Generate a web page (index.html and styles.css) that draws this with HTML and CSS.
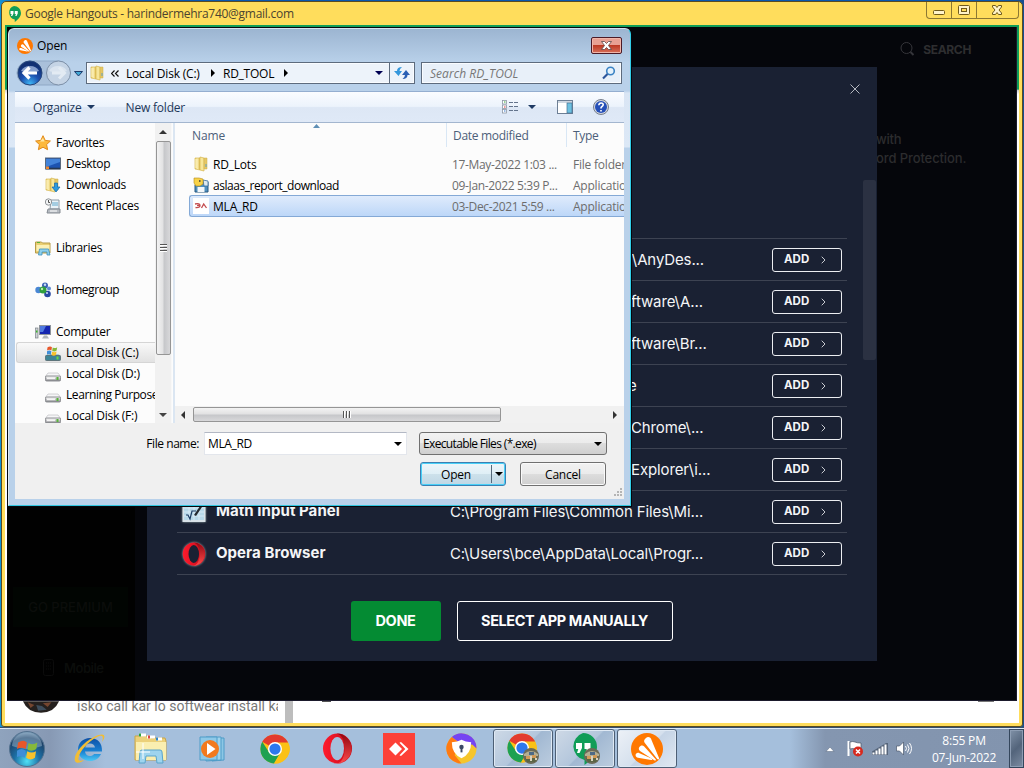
FILE: index.html
```html
<!DOCTYPE html>
<html lang="en">
<head>
<meta charset="utf-8">
<title>Desktop</title>
<link rel="stylesheet" href="styles.css">
</head>
<body>
<svg width="0" height="0" class="defs" aria-hidden="true">
  <defs>
    <linearGradient id="fold" x1="0" x2="1"><stop offset="0" stop-color="#e3c763"/><stop offset=".45" stop-color="#fbeeb0"/><stop offset="1" stop-color="#e0bd50"/></linearGradient>
    <linearGradient id="drv" x1="0" x2="0" y1="0" y2="1"><stop offset="0" stop-color="#f5f5f5"/><stop offset="1" stop-color="#8f9095"/></linearGradient>
    <linearGradient id="op" x1="0" x2="1"><stop offset="0" stop-color="#ff1b2d"/><stop offset="1" stop-color="#c50a1a"/></linearGradient>
    <linearGradient id="op2" x1="0" x2="0" y1="0" y2="1"><stop offset="0" stop-color="#8f0510"/><stop offset="1" stop-color="#ff4b4b"/></linearGradient>
    <radialGradient id="orb" cx=".5" cy=".85" r=".9"><stop offset="0" stop-color="#4fe0f5"/><stop offset=".4" stop-color="#1c6fa5"/><stop offset=".75" stop-color="#1d4167"/><stop offset="1" stop-color="#9fc0d8"/></radialGradient>
    <radialGradient id="back" cx=".5" cy=".95" r=".8"><stop offset="0" stop-color="#3fb7f5"/><stop offset=".5" stop-color="#1c4fae"/><stop offset="1" stop-color="#123072"/></radialGradient>
    <linearGradient id="ie" x1="0" x2="0" y1="0" y2="1"><stop offset="0" stop-color="#0d4fa5"/><stop offset=".6" stop-color="#1b83d4"/><stop offset="1" stop-color="#4cc8f4"/></linearGradient>
    <symbol id="folder" viewBox="0 0 16 16"><path d="M2 2h5v12l-5-1z" fill="url(#fold)" stroke="#d9b955" stroke-width=".7"/><path d="M7 1l4 1v13l-4-1z" fill="#f7e69a" stroke="#d6b44c" stroke-width=".7"/><path d="M11 2h3v11h-3z" fill="#e5c766" stroke="#cfae4a" stroke-width=".5"/><path d="M3 3v9" stroke="#fff6c8"/><path d="M13 8v3" stroke="#5e9fc4"/></symbol>
    <symbol id="avast" viewBox="0 0 32 32"><circle cx="16" cy="16" r="16" fill="#ff7800"/><path d="M15 5c2-2 5-.5 5.500 2l7.500 18c.5 1.500-1 2-2 .8L13.500 9.500C12.500 8 13.500 6 15 5z" fill="#fff"/><path d="M9.500 13c1.300-.8 2.700-.5 3.700.6L24.500 26c1 1.200 0 2-1.300 1.200L9 18C7.200 16.800 7.500 14 9.500 13z" fill="#fff"/><path d="M5.300 20.500c.9-.9 2-.8 3.200-.3L20.500 25.500c1.300.7.8 1.700-.4 1.600L7 24.700c-2.600-.6-3-2.900-1.700-4.200z" fill="#fff"/></symbol>
    <symbol id="hang" viewBox="0 0 28 32"><path d="M14 0a14 14 0 0 1 14 14c0 8-7 14-12.500 18v-5A14 14 0 0 1 14 0z" fill="#109d58"/><path d="M7 10h6v5l-2.500 5H8l1.300-4H7zM15.500 10h6v5L19 20h-2.500l1.300-4h-2.300z" fill="#fff"/></symbol>
    <symbol id="chrome" viewBox="0 0 32 32"><circle cx="16" cy="16" r="15.500" fill="#fbc116"/><path d="M16 16 2.400 8.300A15.600 15.600 0 0 1 29.500 8.300L30 9H16z" fill="#e33b2e"/><path d="M2.400 8.300A15.600 15.600 0 0 0 15 31.500L22 20l-12 0z" fill="#1ea152"/><path d="M15 31.500 22.200 19 30 9a15.500 15.500 0 0 1-15 22.500z" fill="#fbc116"/><circle cx="16" cy="16" r="7.500" fill="#fff"/><circle cx="16" cy="16" r="6" fill="#2d78ee"/></symbol>
    <symbol id="opera" viewBox="0 0 32 32"><ellipse cx="16" cy="16" rx="15" ry="15.500" fill="url(#op)"/><path d="M15 .5a15.500 15.500 0 0 1 0 31C21 31 23.500 23 23.500 16S21 1.500 15 .5z" fill="url(#op2)"/><ellipse cx="15.700" cy="16" rx="7" ry="12" fill="var(--hole)"/></symbol>
    <symbol id="drive" viewBox="0 0 16 16"><path d="M3 7h10l3 4H0z" fill="#f6f6f7" stroke="#b5b6bb" stroke-width=".6"/><rect x=".4" y="10" width="15.200" height="5" rx="1.300" fill="url(#drv)" stroke="#77787d" stroke-width=".8"/><rect x="2" y="11.300" width="8" height="1.800" fill="#f4f4f4"/><rect x="11.500" y="11" width="2" height="3" fill="#58b33a"/></symbol>
    <symbol id="flag" viewBox="0 0 20 20"><path d="M1 4q5-3 8 0L8 10Q4 7.500 0 10z" fill="#e8572a"/><path d="M10.500 4.500q4 2.500 8-.5l-1 6q-4 3-8 .5z" fill="#86b93a"/><path d="M0 11.500q4-3 8 0L7 18q-4-3-8 0z" fill="#3f8ed8"/><path d="M9.300 12q4 2.500 8 0l-1 6q-4 3-8 0z" fill="#f8c22c"/></symbol>
    <symbol id="thumb" viewBox="0 0 16 16"><circle cx="8" cy="8" r="8" fill="#6b6a57"/><path d="M1 6q7-6 14 0v2H1z" fill="#b3ae92"/><path d="M2 10h12l-2 4H4z" fill="#5a6545"/><path d="M3 8h4v3H3zM9 7h4v3H9z" fill="#d19a58"/><path d="M6 4h5v3H6z" fill="#4d6a86"/><path d="M7 8h2v5H7zM12 10h2v2h-2z" fill="#d8d3c0"/></symbol>
    <symbol id="chev" viewBox="0 0 5 8"><path d="M.7.7 4 4 .7 7.300" fill="none" stroke="#c9ccd2"/></symbol>
  </defs>
</svg>

<main class="desktop">
  <section class="hangouts">
    <header class="hg-title">
      <svg class="hg-logo"><use href="#hang"/></svg>
      <span class="hg-name">Google Hangouts - harindermehra740@gmail.com</span>
      <div class="hg-controls">
        <span><svg width="24" height="16"><rect x="6.500" y="8.500" width="11" height="4" rx="1" fill="#fff3c9" stroke="#6f5a1b"/></svg></span>
        <span><svg width="24" height="16"><rect x="6.500" y="3.500" width="11" height="9" rx="1" fill="#fff3c9" stroke="#6f5a1b"/><rect x="9.500" y="6.500" width="5" height="3" fill="#ffdd5c" stroke="#6f5a1b"/></svg></span>
        <span><svg width="41" height="16"><path d="M15.500 3.500h3l1.500 2 1.500-2h3v1.500l-2.500 3 2.500 3v1.500h-3l-1.500-2-1.500 2h-3V11l2.500-3-2.500-3z" fill="#fff3c9" stroke="#6f5a1b"/></svg></span>
      </div>
    </header>
    <div class="hg-body">
      <div class="hg-strip">
        <svg class="hg-avatar" viewBox="0 0 40 12"><path d="M1 0h38Q34 12 20 12 6 12 1 0z" fill="#25201e"/><path d="M6 1l7 3-4 3zM22 2l9-1-4 5z" fill="#74452f"/><path d="M15 4l6 1 5 4-9 1z" fill="#3d4d5c"/></svg>
        <span class="hg-msg">isko call kar lo softwear install ka</span>
        <span class="hg-scroll"></span>
        <span class="hg-dot"></span>
        <span class="hg-dash"></span>
      </div>
    </div>
  </section>

  <section class="avast">
    <aside class="av-side">
      <div class="premium">GO PREMIUM</div>
      <div class="mobile"><svg width="12" height="18"><rect x=".5" y=".5" width="10" height="16" rx="2" fill="none" stroke="#0c0c0c"/><path d="M3 4h5M3 7h5M3 10h5" stroke="#0c0c0c" stroke-dasharray="1 1"/></svg>Mobile</div>
    </aside>
    <div class="av-main">
      <div class="search"><svg width="16" height="16"><circle cx="6.500" cy="7" r="5.500" fill="none" stroke="#35353a"/><path d="M10.500 11l3 3" stroke="#35353a" stroke-width="2"/></svg>SEARCH</div>
      <p class="promo">with<br><span>ord Protection.</span></p>
    </div>
  </section>

  <section class="modal">
    <svg class="modal-x" width="10" height="10"><path d="M.5.5l9 9M9.500.5l-9 9" stroke="#b4b8c0"/></svg>
    <span class="modal-scroll"></span>
    <div class="apps">
      <div class="app"><i></i><b></b><span class="cut p1">t\AnyDes...</span><button>ADD <svg><use href="#chev"/></svg></button></div>
      <div class="app"><i></i><b></b><span class="cut p2">ftware\A...</span><button>ADD <svg><use href="#chev"/></svg></button></div>
      <div class="app"><i></i><b></b><span class="cut p3">ftware\Br...</span><button>ADD <svg><use href="#chev"/></svg></button></div>
      <div class="app"><i></i><b></b><span class="cut p4">e</span><button>ADD <svg><use href="#chev"/></svg></button></div>
      <div class="app"><i></i><b></b><span class="cut p5">Chrome\...</span><button>ADD <svg><use href="#chev"/></svg></button></div>
      <div class="app"><i></i><b></b><span class="cut p6">Explorer\i...</span><button>ADD <svg><use href="#chev"/></svg></button></div>
      <div class="app"><i><svg viewBox="0 0 24 24"><rect x=".5" y="1" width="23" height="21" fill="#d9e2e8"/><rect x="2" y="3" width="20" height="17" fill="#b7d8e8"/><path d="M2 8h20M2 12h20M2 16h20M7 4v16M12 4v16M17 4v16" stroke="#e2f1f9" stroke-width=".7"/><path d="M4 15l2 0 2 4 2-8h4" fill="none" stroke="#1c3c64" stroke-width="1.200"/><path d="M12 15l8-12 2 1-8 12z" fill="#24292f"/></svg></i><b>Math Input Panel</b><span>C:\Program Files\Common Files\Mi...</span><button>ADD <svg><use href="#chev"/></svg></button></div>
      <div class="app"><i><svg viewBox="0 0 24 24"><use href="#opera"/></svg></i><b class="ob">Opera Browser</b><span class="pth2">C:\Users\bce\AppData\Local\Progr...</span><button>ADD <svg><use href="#chev"/></svg></button></div>
    </div>
    <div class="actions"><button class="done">DONE</button><button class="manual">SELECT APP MANUALLY</button></div>
  </section>

  <section class="dialog">
    <header class="dl-title"><svg class="dl-logo"><use href="#avast"/></svg><span>Open</span>
      <div class="dl-close"><svg width="11" height="9" viewBox="0 0 11 9"><path d="M.5.500h3l2 2 2-2h3L7.500 4.500l3 4h-3l-2-2-2 2h-3l3-4z" fill="#fff" stroke="#5d4747" stroke-width=".8"/></svg></div>
    </header>
    <div class="dl-nav">
      <svg class="navbtns" width="68" height="28" viewBox="0 0 68 28"><path d="M14 2h29a12 12 0 0 1 0 24H14a12 12 0 0 1 0-24z" fill="#a9c0da" stroke="#8fa8c5"/><circle cx="15" cy="14" r="12" fill="url(#back)" stroke="#27477c"/><path d="M6 12a10 9 0 0 1 18 0q-9 3-18 0z" fill="#b8cbea" opacity=".7"/><path d="M14.500 8.500L9 14l5.500 5.500M9.500 14H22" fill="none" stroke="#fff" stroke-width="3.200"/><circle cx="43.500" cy="14" r="12" fill="#c5d4e5" stroke="#7d90a8"/><path d="M34 12a10 9 0 0 1 18 0q-9 3-18 0z" fill="#dae4ef"/><path d="M44 8.500l5.500 5.500-5.500 5.500M49 14H37" fill="none" stroke="#e3ebf3" stroke-width="3"/><path d="M59.500 12.500h8L63.500 17z" fill="#3fa8d6" stroke="#1c3a6b"/></svg>
      <div class="addr">
        <svg width="16" height="16"><use href="#folder"/></svg><svg class="dbl" width="8" height="7"><path d="M3.500.5l-3 3 3 3M7.500.5l-3 3 3 3" fill="none" stroke="#111" stroke-width="1.200"/></svg>
        <span class="disk">Local Disk (C:)</span><i class="tri-r"></i><span class="rd">RD_TOOL</span><i class="tri-r"></i>
        <i class="tri-d navy"></i>
        <div class="refresh"><svg width="16" height="14"><path d="M8 1Q3 1 3 5H0l4.500 5L8 5H5.500Q5.500 3 8 1z" fill="#3497dc"/><path d="M8.500 13q5 0 5-4H16L12 4 8 9h3q0 2-2.500 4z" fill="#2a5fb4"/></svg></div>
      </div>
      <div class="dl-search"><span>Search RD_TOOL</span><svg width="14" height="14"><circle cx="8.500" cy="5" r="3.800" fill="#e4f1fb" stroke="#3a83c4" stroke-width="1.600"/><path d="M5.500 8L1 12.500" stroke="#2b559b" stroke-width="2.200"/></svg></div>
    </div>
    <div class="dl-tools">
      <span class="organize">Organize</span><i class="tri-d"></i><span class="newf">New folder</span>
      <svg class="views" width="34" height="14"><g fill="#fff" stroke="#8d97a5" stroke-width=".8"><rect x=".5" y=".5" width="4" height="3.500"/><rect x=".5" y="5" width="4" height="3.500"/><rect x=".5" y="9.500" width="4" height="3.500"/></g><path d="M2 2h1.500" stroke="#3a3"/><path d="M2 7h1.500" stroke="#d33"/><path d="M2 11h1.500" stroke="#37c"/><path d="M7 2.500h9M7 6.500h9M7 10.500h9" stroke="#64748c" stroke-dasharray="4 1"/><path d="M26 5h8l-4 4z" fill="#1e3a63"/></svg>
      <svg class="preview" width="16" height="14"><rect x=".5" y=".5" width="15" height="13" fill="#fff" stroke="#6d7f95"/><path d="M1 2h14" stroke="#9cafc4"/><rect x="10" y="3" width="5" height="10" fill="#6cc0e0" stroke="#456f92" stroke-width=".7"/></svg>
      <svg class="help" width="16" height="16"><circle cx="8" cy="8" r="7.500" fill="#d2d6de" stroke="#777f8d"/><circle cx="8" cy="8" r="6" fill="#254fb8"/><path d="M5.800 6.300q.2-2.300 2.300-2.300t2.100 1.800q0 1-1.200 1.700T8 9.500M8 11v1.500" fill="none" stroke="#fff" stroke-width="1.600"/></svg>
    </div>
    <div class="dl-body">
      <nav class="tree">
        <div class="r top"><svg viewBox="0 0 16 16"><path d="M8 .7l2.200 4.700 5.200.6-3.800 3.500 1 5.200L8 12.200l-4.600 2.500 1-5.200L.6 6l5.200-.6z" fill="#fdb93c" stroke="#e18a1a"/><path d="M8 3l1.500 3.500H5z" fill="#ffe9a8"/></svg>Favorites</div>
        <div class="r"><svg viewBox="0 0 16 16"><rect x=".5" y="2" width="15" height="11" fill="#1c53b0" stroke="#59697d"/><path d="M1 3h14v3L1 11z" fill="#4283d9"/><path d="M1 12.500h14" stroke="#26374f" stroke-width="1.600"/><rect x="1" y="10.500" width="3" height="2.500" fill="#f0862c"/></svg>Desktop</div>
        <div class="r dn"><svg viewBox="0 0 16 16"><use href="#folder" x="-1" width="16" height="16"/><path d="M9.500 6h3v4H15l-4 5L7 10h2.500z" fill="#2b9ae0" stroke="#1568a8" stroke-width=".7"/></svg>Downloads</div>
        <div class="r"><svg viewBox="0 0 16 16"><path d="M6 2h8v9H5z" fill="#eaf2f7" stroke="#8e9ba6"/><path d="M7 5h6M7 7h6" stroke="#61a8cc"/><path d="M3 11h12v4H2z" fill="#b7bcc2" stroke="#858b92"/><circle cx="3.500" cy="4" r="3.200" fill="#f2f4f5" stroke="#8e9296"/><path d="M3.500 2v2.500H5" stroke="#555" fill="none"/><path d="M5 13h7" stroke="#fff"/></svg>Recent Places</div>
        <div class="r gap"></div>
        <div class="r top"><svg viewBox="0 0 16 16"><path d="M.5 3V2h6l1 1h7.500v10H.5z" fill="#e9ce72" stroke="#b69b48"/><path d="M1.500 5h13v6h-13z" fill="#fbf0b4"/><path d="M2 2.500h3" stroke="#56b338"/><path d="M3.500 15l1-6h9l1.500 6h-3v-3h-5v3z" fill="#8fd0ec" stroke="#3e90bc" stroke-width=".8"/></svg>Libraries</div>
        <div class="r gap"></div>
        <div class="r top hm"><svg viewBox="0 0 16 16"><circle cx="10" cy="3.500" r="3" fill="#3b62b5"/><circle cx="3.500" cy="8" r="3.200" fill="#4a87d4"/><circle cx="12.500" cy="12" r="3.300" fill="#2848a3"/><circle cx="14" cy="6.500" r="2" fill="#5c8bd0"/><circle cx="8" cy="8" r="3.500" fill="#2f9f3c"/><circle cx="7" cy="7" r="1.200" fill="#b4eab0"/><circle cx="10" cy="2.700" r="1.200" fill="#c8dcf6"/><circle cx="12" cy="11" r="1" fill="#cfe0fa"/></svg>Homegroup</div>
        <div class="r gap"></div>
        <div class="r top"><svg viewBox="0 0 16 16"><rect x=".5" y="4" width="2.500" height="10" fill="#cdd1d5" stroke="#7b8288" stroke-width=".7"/><path d="M1 7.500h1.500" stroke="#3db52c" stroke-width="2"/><rect x="4.500" y="1.500" width="11" height="9" fill="#1526b0" stroke="#8d939b"/><path d="M5 2h6L8 8H5z" fill="#4f79e0"/><path d="M7 14.500l2-3h3l2 3z" fill="#aeb4ba"/></svg>Computer</div>
        <div class="r sel"><svg viewBox="0 0 16 16"><path d="M2.500 9h11l2 2H.5z" fill="#a7c8cf"/><rect x=".4" y="10.500" width="15.200" height="5" rx="1" fill="#3d8596" stroke="#50636a" stroke-width=".8"/><rect x="11.500" y="11.500" width="2" height="3" fill="#64d649"/><use href="#flag" x="2" y="0" width="11" height="11"/></svg>Local Disk (C:)</div>
        <div class="r"><svg viewBox="0 0 16 16"><use href="#drive"/></svg>Local Disk (D:)</div>
        <div class="r lp"><svg viewBox="0 0 16 16"><use href="#drive"/></svg>Learning Purpose</div>
        <div class="r"><svg viewBox="0 0 16 16"><use href="#drive"/></svg>Local Disk (F:)</div>
      </nav>
      <div class="vscroll"><i class="tri-u"></i><span class="vthumb"><em></em></span><i class="tri-d"></i></div>
      <div class="list">
        <div class="head"><span>Name</span><span class="c2">Date modified</span><span class="c3">Type</span><svg class="sort" width="7" height="4"><path d="M0 4l3.500-4L7 4z" fill="#5f8fb5"/></svg></div>
        <div class="files">
          <div class="file"><svg viewBox="0 0 16 16"><use href="#folder"/></svg><b>RD_Lots</b><span>17-May-2022 1:03 ...</span><span class="ty">File folder</span></div>
          <div class="file"><svg viewBox="0 0 16 16"><path d="M4 5h11v10H2V8z" fill="#4f8fc0" stroke="#27567e"/><rect x="4.500" y="10" width="7" height="5" fill="#f3f7fa"/><path d="M10 3l5 1v5h-4z" fill="#dfe9f0" stroke="#376d9d" stroke-width=".8"/><path d="M1 1h5l4 1v5l-3 2H3L1 6z" fill="#f8d248" stroke="#b28a1a" stroke-width=".6"/><path d="M6 4h1.500" stroke="#333" stroke-width="1.300"/></svg><b class="asl">aslaas_report_download</b><span>09-Jan-2022 5:39 P...</span><span class="ty">Applicatio</span></div>
          <div class="file on"><svg viewBox="0 0 16 16"><rect width="16" height="16" fill="#fff"/><path d="M2 6q5-1 5 1.500T2.500 9.500M4 7.500h3M8.500 10l2.200-4 2.800 4" fill="none" stroke="#c34b4f" stroke-width="1.300"/></svg><b>MLA_RD</b><span>03-Dec-2021 5:59 ...</span><span class="ty">Applicatio</span></div>
        </div>
        <div class="hscroll"><i class="tri-l"></i><span class="hthumb"><em></em></span><i class="tri-r"></i></div>
      </div>
    </div>
    <footer class="dl-foot">
      <div class="frow"><label>File name:</label><div class="fname"><span>MLA_RD</span><i class="tri-d blk"></i></div><div class="ftype"><span>Executable Files (*.exe)</span><i class="tri-d blk"></i></div></div>
      <div class="brow"><button class="w7 open"><span>Open</span><em><i class="tri-d blk"></i></em></button><button class="w7 cancel">Cancel</button></div>
      <svg class="grip" width="9" height="9"><path d="M7 1h2M7 4h2M4 4h2M7 7h2M4 7h2M1 7h2" stroke="#b5b5b5" stroke-width="2"/></svg>
    </footer>
  </section>

  <footer class="taskbar">
    <div class="slot start"><svg width="36" height="36" viewBox="0 0 36 36"><circle cx="18" cy="18" r="17.500" fill="url(#orb)" stroke="#53718e"/><path d="M3 15a15 13.500 0 0 1 30 0q-15 6-30 0z" fill="#a8c2d4" opacity=".45"/><use href="#flag" x="8" y="7" width="22" height="22"/></svg></div>
    <div class="slot ie"><svg width="34" height="32" viewBox="0 0 34 32"><path d="M17 5c-7 0-12 5-12 11.500S10 28 17 28c5 0 9-2.500 11-7h-7c-1 1.500-2.500 2-4 2-3 0-4.700-2-5-4.500h17C29.500 10 24.500 5 17 5zm-4.800 9.500C12.600 12 14.500 10.500 17 10.500s4.500 1.500 5 4z" fill="url(#ie)" fill-rule="evenodd"/><path d="M29 9C34 2 31-1 21 4 9 10 0 22 2 28c1 3 6 2 9-1-4 1.500-6 1-5.500-2C6.500 18 16 8 24 4c5-2.500 7-1 5 5z" fill="#f2bd35"/></svg></div>
    <div class="slot"><svg width="34" height="32" viewBox="0 0 34 32"><path d="M1 3h14l2 2h14l1 3v19H1z" fill="#ecd079" stroke="#c9a64a"/><path d="M5 2h7M13 4h8M22 6h6" stroke="#fff" stroke-width="3"/><path d="M5 2h2" stroke="#2ba33d" stroke-width="3"/><path d="M14 4h2" stroke="#d44" stroke-width="3"/><path d="M22 6h2" stroke="#38c" stroke-width="3"/><path d="M2 9h30v18H2z" fill="#faeeb0"/><path d="M5 30l1-11q0-2 2-2h18q2 0 2 2l1 11h-6l-1-7H12l-1 7z" fill="#9ed4ee" stroke="#5aa4cb"/><path d="M9 10v16M2 19h14" stroke="#fff" stroke-width="1"/></svg></div>
    <div class="slot"><svg width="30" height="28" viewBox="0 0 30 28"><path d="M14 3h12v22l-12 1z" fill="#8cc7e5" stroke="#4e9cc8"/><path d="M8 2h15v23l-15 1z" fill="#9fd3ec" stroke="#4e9cc8"/><path d="M2 2h17v23H2z" fill="#8ec9e8" stroke="#4e9cc8"/><circle cx="12" cy="14" r="9" fill="#f27a1e"/><path d="M9 8l8.500 6L9 20z" fill="#fff"/></svg></div>
    <div class="slot"><svg width="30" height="30"><use href="#chrome"/></svg></div>
    <div class="slot"><svg width="31" height="31"><use href="#opera"/></svg></div>
    <div class="slot"><svg width="32" height="32"><path d="M0 0h32v32H0z" fill="#fd4037"/><path d="M12.500 9.500l6.500 6.500-6.500 6.500L6 16z" fill="#fff"/><path d="M16.500 9.800L18 9l7.500 7-7.500 7-1.500-.8L22.300 16z" fill="#fff"/></svg></div>
    <div class="slot"><svg width="31" height="31" viewBox="0 0 32 32"><circle cx="16" cy="16" r="15.500" fill="#f6c52b"/><path d="M16 31.500A15.500 15.500 0 0 1 6 4l6 5-3 14z" fill="#ff7a12"/><path d="M6 4a15.500 15.500 0 0 1 25.500 12l-4-4-15-3z" fill="#7544f2"/><path d="M16 7q4 2.500 10 2.500 0 12-10 16.500Q6 21.500 6 9.500q6 0 10-2.500z" fill="#fff"/><circle cx="16" cy="14.500" r="2.300" fill="#3b4966"/><path d="M15 15h2v5h-2z" fill="#3b4966"/></svg></div>
    <div class="task"><svg width="32" height="32" viewBox="0 0 32 32"><use href="#chrome" width="30" height="30"/><use href="#thumb" x="16" y="15" width="16" height="16"/></svg></div>
    <div class="task"><svg width="32" height="32" viewBox="0 0 32 32"><use href="#hang" width="28" height="32"/><use href="#thumb" x="15" y="15" width="16" height="16"/></svg></div>
    <div class="task lit"><svg width="32" height="32"><use href="#avast"/></svg></div>
    <div class="tray">
      <svg width="10" height="6"><path d="M1 5.500L5 1l4 4.500z" fill="#fff" stroke="#54657c" stroke-width=".5"/></svg>
      <svg class="tf" width="17" height="17"><path d="M1.500 1v15" stroke="#fff" stroke-width="2"/><path d="M3 2q3-1 5 0t6 1v7q-4 0-6-1T3 9z" fill="#fff" stroke="#485465" stroke-width=".7"/><circle cx="11" cy="11.500" r="5" fill="#d7291e"/><path d="M9 9.500l4 4M13 9.500l-4 4" stroke="#fff" stroke-width="1.500"/></svg>
      <svg class="sg" width="16" height="12"><path d="M0 12V8.500L14 0h2v12z" fill="#56657a"/><path d="M1.500 9.500v2M4.500 7.500v4M7.500 5.500v6M10.500 3.500v8M13.500 1.500v10" stroke="#fff" stroke-width="2"/></svg>
      <svg class="sp" width="16" height="15"><path d="M.5 5h3l4-4v13l-4-4h-3z" fill="#fff" stroke="#4b586b" stroke-width=".7"/><path d="M9.500 5q2 2.500 0 5M11.500 3.500q3 4 0 8M13.500 2q4 5.500 0 11" fill="none" stroke="#fff"/></svg>
      <div class="clock"><span>8:55 PM</span><span class="dt">07-Jun-2022</span></div>
      <div class="peek"></div>
    </div>
  </footer>
</main>
</body>
</html>
```
FILE: styles.css
```css
* { box-sizing: border-box; }
body { margin: 0; font: 12px "Open Sans", "Noto Sans", sans-serif; }
button { font: inherit; letter-spacing: inherit; margin: 0; padding: 0; }
svg { display: block; flex: none; }
i, em, b { font-style: normal; font-weight: normal; }
.defs { position: absolute; }
.desktop { position: relative; width: 1024px; height: 768px; overflow: hidden; background: linear-gradient(90deg, #1493d6 0, #0a58b0 2%, #0a58b0 98%, #174f8e 100%); --hole: #a5bfdc; }
.desktop span, .desktop button { white-space: nowrap; }

/* Hangouts window */
.hangouts { position: absolute; left: 1px; top: 1px; width: 1022px; height: 726px; border: 1px solid #5a4c22; border-radius: 5px 5px 3px 3px; background: #ffdd5c; padding: 0 3px 3px; display: flex; flex-direction: column; }
.hg-title { height: 23px; display: flex; align-items: center; padding-left: 1px; color: #4b4430; }
.hg-logo { width: 14px; height: 16px; margin-left: 1px; }
.hg-name { margin-left: 4px; flex: 1; letter-spacing: -.27px; }
.hg-controls { align-self: flex-start; display: flex; border: 1px solid #8c7833; border-top: 0; border-radius: 0 0 4px 4px; }
.hg-controls span + span { border-left: 1px solid #8c7833; }
.hg-body { flex: 1; border: 2px solid #eee; border-bottom: 0; border-image: linear-gradient(#109d58 64px, #cfcfcf 65px, #fff 69px) 2; background: #fff; display: flex; align-items: flex-end; }
.hg-strip { height: 22px; width: 100%; display: flex; align-items: flex-start; }
.hg-avatar { width: 38px; height: 12px; margin-left: 15px; }
.hg-msg { font-family: Roboto, sans-serif; font-size: 14px; color: #777; width: 201px; overflow: hidden; margin: -3px 0 0 17px; letter-spacing: 0; }
.hg-scroll { width: 8px; height: 22px; background: #bdbdbd; margin-left: 7px; }
.hg-dot { width: 9px; height: 1px; background: #555; margin-left: 29px; }
.hg-dash { width: 16px; height: 1px; background: #777; margin-left: 647px; }

/* Antivirus window behind the modal */
.avast { position: absolute; left: 7px; top: 27px; width: 1010px; height: 674px; display: flex; background: #05060b; border-bottom: 1px solid #1b1a2c; border-right: 1px solid #1b1a2c; font-family: Inter, sans-serif; }
.av-side { width: 128px; background: #010101; display: flex; flex-direction: column; padding: 560px 6px 0; color: #0b0d0b; }
.premium { height: 40px; background: #010502; text-align: center; font-size: 13px; font-weight: 500; line-height: 40px; margin-right: 1px; }
.mobile { margin-top: 32px; padding-left: 30px; height: 18px; display: flex; align-items: center; gap: 9px; font-size: 13px; font-weight: 600; letter-spacing: -.5px; }
.av-main { flex: 1; display: flex; flex-direction: column; align-items: flex-end; padding-top: 14px; }
.search { display: flex; align-items: center; gap: 7px; color: #2e2e30; font-weight: 700; font-size: 12px; letter-spacing: -.35px; margin-right: 45px; }
.promo { margin: 73px 13px 0 0; width: 127px; font-size: 13px; line-height: 19px; font-weight: 500; color: #2c2c2e; letter-spacing: -.25px; }
.promo span { letter-spacing: -.1px; }

.modal { position: absolute; left: 147px; top: 67px; width: 730px; height: 594px; background: #1a2133; padding: 171px 30px 0; font-family: Inter, sans-serif; color: #f4f5f7; --hole: #1a2133; }
.modal-x { position: absolute; right: 17px; top: 17px; }
.modal-scroll { position: absolute; right: 1px; top: 113px; width: 13px; height: 180px; border-radius: 2px; background: #2b3142; }
.apps { border-bottom: 1px solid #3d4352; }
.app { height: 42px; border-top: 1px solid #3d4352; display: grid; grid-template-columns: 38px 235px 322px 70px; align-items: center; font-size: 15px; }
.app i svg { width: 24px; height: 24px; margin-left: 5px; filter: drop-shadow(0 0 1px #9aa); }
.app b { font-weight: 700; letter-spacing: .05px; margin: -2px 0 0 1px; }
.app span { letter-spacing: -.12px; margin-top: -1px; }
.app button { width: 70px; height: 24px; border: 1px solid #eceef2; border-radius: 3px; background: none; color: #f4f5f7; font-weight: 700; font-size: 11.500px; letter-spacing: 0; display: flex; align-items: center; padding: 0 0 1px 11px; }
.app button svg { width: 5px; height: 8px; margin: 2px 0 0 12px; }
.app .cut { margin-left: 181px; }
.app .p1 { margin-left: 177px; }
.app .p4 { margin-left: 178px; }
.actions { display: flex; justify-content: center; gap: 16px; padding-top: 26px; }
.actions button { height: 40px; border-radius: 3px; font-weight: 700; font-size: 14.500px; color: #fff; letter-spacing: -.4px; padding: 0 1px 2px 0; }
.done { width: 90px; border: 0; background: #048b33; }
.manual { width: 216px; border: 1px solid #fff; background: none; }
.actions .manual { border: 1px solid #fff; }

/* File dialog */
.dialog { position: absolute; left: 8px; top: 28px; width: 623px; height: 478px; border-radius: 6px 6px 0 0; background: linear-gradient(#9cb5d1 0, #b9d1ea 34px, #b9d1ea 62px, #d9e5f4 64px, #dce8f6 118px, #b9d1ea 119px, #b9d1ea); border: 1px solid #35c6e0; border-color: #d5e3f0 #31cde8 #31c6e0 #e0ecf5; box-shadow: 0 0 0 1px #05070c; padding: 0 6px 6px; display: flex; flex-direction: column; color: #000; letter-spacing: -.2px; }
.dl-title { height: 33px; display: flex; align-items: center; padding-left: 2px; }
.dl-logo { width: 16px; height: 16px; margin-right: 4px; }
.dl-title span { flex: 1; letter-spacing: -.1px; }
.dl-close { width: 31px; height: 17px; border: 1px solid #4c1a26; border-radius: 2px; box-shadow: inset 0 0 0 1px #f0b5aa; background: linear-gradient(#e8a093 48%, #bd3a25 50%, #d7705a); display: grid; place-items: center; margin-right: 2px; }
.dl-nav { height: 29px; display: flex; padding-right: 2px; }
.navbtns { margin: -3px 3px 0 0; }
.addr { width: 329px; height: 22px; border: 1px solid #5d6b7d; background: #edf3fa; display: flex; align-items: center; box-shadow: inset 0 0 0 1px #f9fcff; padding-left: 2px; }
.dbl { margin: 0 7px 0 6px; }
.disk { width: 75px; margin-right: 10px; }
.rd { margin: 0 10px 0 8px; width: 51px; letter-spacing: -.25px; }
.tri-r { border: 4px solid transparent; border-left-color: #000; border-right: 0; }
.tri-l { border: 4px solid transparent; border-right-color: #333; border-left: 0; }
.tri-d { border: 4px solid transparent; border-top-color: #1e3a63; border-bottom: 0; }
.tri-u { border: 4px solid transparent; border-bottom-color: #333; border-top: 0; }
.tri-d.navy { margin-left: auto; border-top-color: #000052; }
.tri-d.blk { border-top-color: #000; }
.refresh { margin-left: 6px; width: 25px; height: 20px; border-left: 1px solid #5d6b7d; display: grid; place-items: center; }
.dl-search { flex: 1; margin-left: 6px; height: 22px; border: 1px solid #5d6b7d; background: #e8f0f9; box-shadow: inset 0 0 0 1px #f9fcff; display: flex; justify-content: space-between; align-items: center; padding: 0 5px 0 8px; font-style: italic; color: #777; letter-spacing: .05px; }
.dl-tools { height: 32px; border-bottom: 1px solid #a3b6cf; border-top: 1px solid #94aed0; background: linear-gradient(#fafcff, #ecf3fc 48%, #dde7f5 52%, #dfe9f7); display: flex; align-items: center; color: #1e395b; padding-left: 18px; }
.organize { margin-right: 5px; }
.newf { margin-left: 31px; }
.views { margin-left: auto; }
.preview { margin-left: 21px; }
.help { margin: 0 15px 0 20px; }
.dl-body { height: 300px; display: flex; background: #fcfcfc; }
.tree { width: 140px; padding-top: 9px; overflow: hidden; letter-spacing: -.28px; }
.r { height: 21px; display: flex; align-items: center; gap: 5px; padding-left: 30px; white-space: nowrap; }
.r svg { width: 16px; height: 16px; }
.r.top { padding-left: 20px; }
.r.hm { letter-spacing: -.45px; }
.r.lp { letter-spacing: -.4px; }
.r.sel { margin-left: 1px; padding-left: 28px; border: 1px solid #d5d5d5; border-right: 0; border-radius: 3px 0 0 3px; background: linear-gradient(#f9f9f9, #e2e2e2); }
.vscroll { width: 17px; background: #f1f1f1; border-right: 1px solid #f8f8f8; display: flex; flex-direction: column; align-items: center; padding: 7px 0 6px; }
.vscroll .tri-d { margin-top: auto; border-top-color: #444; }
.vthumb { width: 15px; height: 214px; margin-top: 7px; border: 1px solid #959595; border-radius: 2px; background: linear-gradient(90deg, #f3f3f3, #e2e2e3 45%, #c6c7ca 55%, #d8d8da); display: grid; place-items: center; }
.vthumb em { width: 7px; height: 8px; background: repeating-linear-gradient(#555 0 1px, #fff 1px 2px, transparent 2px 3px); }
.list { flex: 1; min-width: 0; display: flex; flex-direction: column; border-left: 2px solid #dbe6f2; margin-left: 1px; overflow: hidden; }
.head { position: relative; height: 24px; display: grid; grid-template-columns: 271px 120px 1fr; color: #4c607a; align-items: center; letter-spacing: -.35px; }
.head span { padding-left: 17px; line-height: 26px; height: 24px; }
.head span:first-child { letter-spacing: -.1px; }
.head .c2 { letter-spacing: -.3px; }
.head .c2, .head .c3 { padding-left: 6px; border-left: 1px solid #d9e7f5; }
.sort { position: absolute; left: 138px; top: 1px; }
.files { flex: 1; padding-top: 6px; }
.file { height: 22px; margin: 0 0 -1px 14px; display: grid; grid-template-columns: 24px 239px 120px 1fr; align-items: center; border: 1px solid transparent; border-right: 0; padding-left: 3px; }
.file svg { width: 16px; height: 16px; }
.file b { margin-left: -4px; }
.file .asl { letter-spacing: -.45px; }
.file span { color: #6d6d6d; margin-left: -4px; letter-spacing: -.35px; }
.file .ty { letter-spacing: -.22px; margin-left: -3px; }
.file.on { border-color: #84a9d6; border-radius: 3px 0 0 3px; background: linear-gradient(#dfebfc, #bdd7f8); }
.hscroll { height: 17px; background: #f1f1f1; display: flex; align-items: center; padding: 0 7px 0 6px; }
.hthumb { width: 308px; height: 15px; margin-left: 8px; border: 1px solid #959595; border-radius: 2px; background: linear-gradient(#f3f3f3, #e2e2e3 45%, #c6c7ca 55%, #d8d8da); display: grid; place-items: center; }
.hthumb em { width: 8px; height: 7px; background: repeating-linear-gradient(90deg, #555 0 1px, #fff 1px 2px, transparent 2px 3px); }
.hscroll .tri-r { margin-left: auto; border-left-color: #333; }
.dl-foot { position: relative; flex: 1; background: #f0f0f0; padding: 9px 17px 0 0; letter-spacing: -.35px; }
.frow, .brow { display: flex; justify-content: flex-end; align-items: center; }
.frow label { letter-spacing: -.45px; }
.fname { width: 203px; height: 23px; margin: 0 12px 0 5px; background: #fff; border: 1px solid #e3e6ec; border-top-color: #b3b8c4; display: flex; align-items: center; justify-content: space-between; padding: 0 4px 0 3px; }
.ftype { width: 188px; height: 23px; border: 1px solid #707070; border-radius: 3px; background: linear-gradient(#f2f2f2, #ebebeb 48%, #dddddd 50%, #cfcfcf); display: flex; align-items: center; justify-content: space-between; padding: 0 4px 0 3px; letter-spacing: -.65px; }
.brow { margin-top: 7px; padding-right: 1px; gap: 14px; }
.w7 { width: 86px; height: 24px; border: 1px solid #707070; border-radius: 3px; box-shadow: inset 0 0 0 1px #fafafa; background: linear-gradient(#f2f2f2, #ebebeb 48%, #dddddd 50%, #cfcfcf); color: #000; letter-spacing: -.2px; }
.open { display: flex; align-items: center; border-color: #3c7fb1; box-shadow: inset 0 0 0 1px #48d0f8; background: linear-gradient(#eef5f9, #dfeff6 48%, #cde1eb 50%, #bfd7e5); }
.open span { flex: 1; }
.open em { width: 14px; height: 18px; border-left: 1px solid #55697a; display: grid; place-items: center; }
.grip { position: absolute; right: 2px; bottom: 2px; }

/* Taskbar */
.taskbar { position: absolute; left: 0; top: 728px; width: 1024px; height: 40px; border-top: 1px solid #dde9f5; box-shadow: 0 -1px #35506e; display: flex; align-items: center; background: linear-gradient(90deg, #8fa3bd 0, #8799b4 50px, #a5bfdc 105px, #a5bfdc 790px, #8496b0 825px, #8294ae); }
.slot { width: 62px; display: grid; place-items: center; }
.start { width: 58px; padding-right: 4px; }
.ie { padding-left: 2px; }
.task { width: 60px; height: 39px; margin-right: 2px; border: 1px solid #4d5f75; border-radius: 3px; box-shadow: inset 0 0 0 1px #dfe9f4; background: linear-gradient(135deg, #ced9e6, #b3c6dc 50%, #a1b8d2 52%, #bccddf); display: grid; place-items: center; }
.slot + .task { margin-left: 1px; }
.lit { background: linear-gradient(135deg, #edf1f7, #d5e0ed 50%, #c5d4e6 52%, #e0e8f1); }
.tray { margin-left: auto; height: 40px; display: flex; align-items: center; color: #fff; }
.tf { margin-left: 12px; }
.sg { margin-left: 8px; }
.sp { margin-left: 8px; }
.clock { width: 78px; margin: 0 6px 0 13px; display: flex; flex-direction: column; align-items: center; line-height: 17px; letter-spacing: -.2px; }
.clock .dt { letter-spacing: -.25px; }
.peek { width: 15px; height: 39px; border: 1px solid #34465c; box-shadow: inset 0 0 0 1px #8d9db3; background: linear-gradient(135deg, #8192a8, #53647b 50%, #7d8ca2); }
```
